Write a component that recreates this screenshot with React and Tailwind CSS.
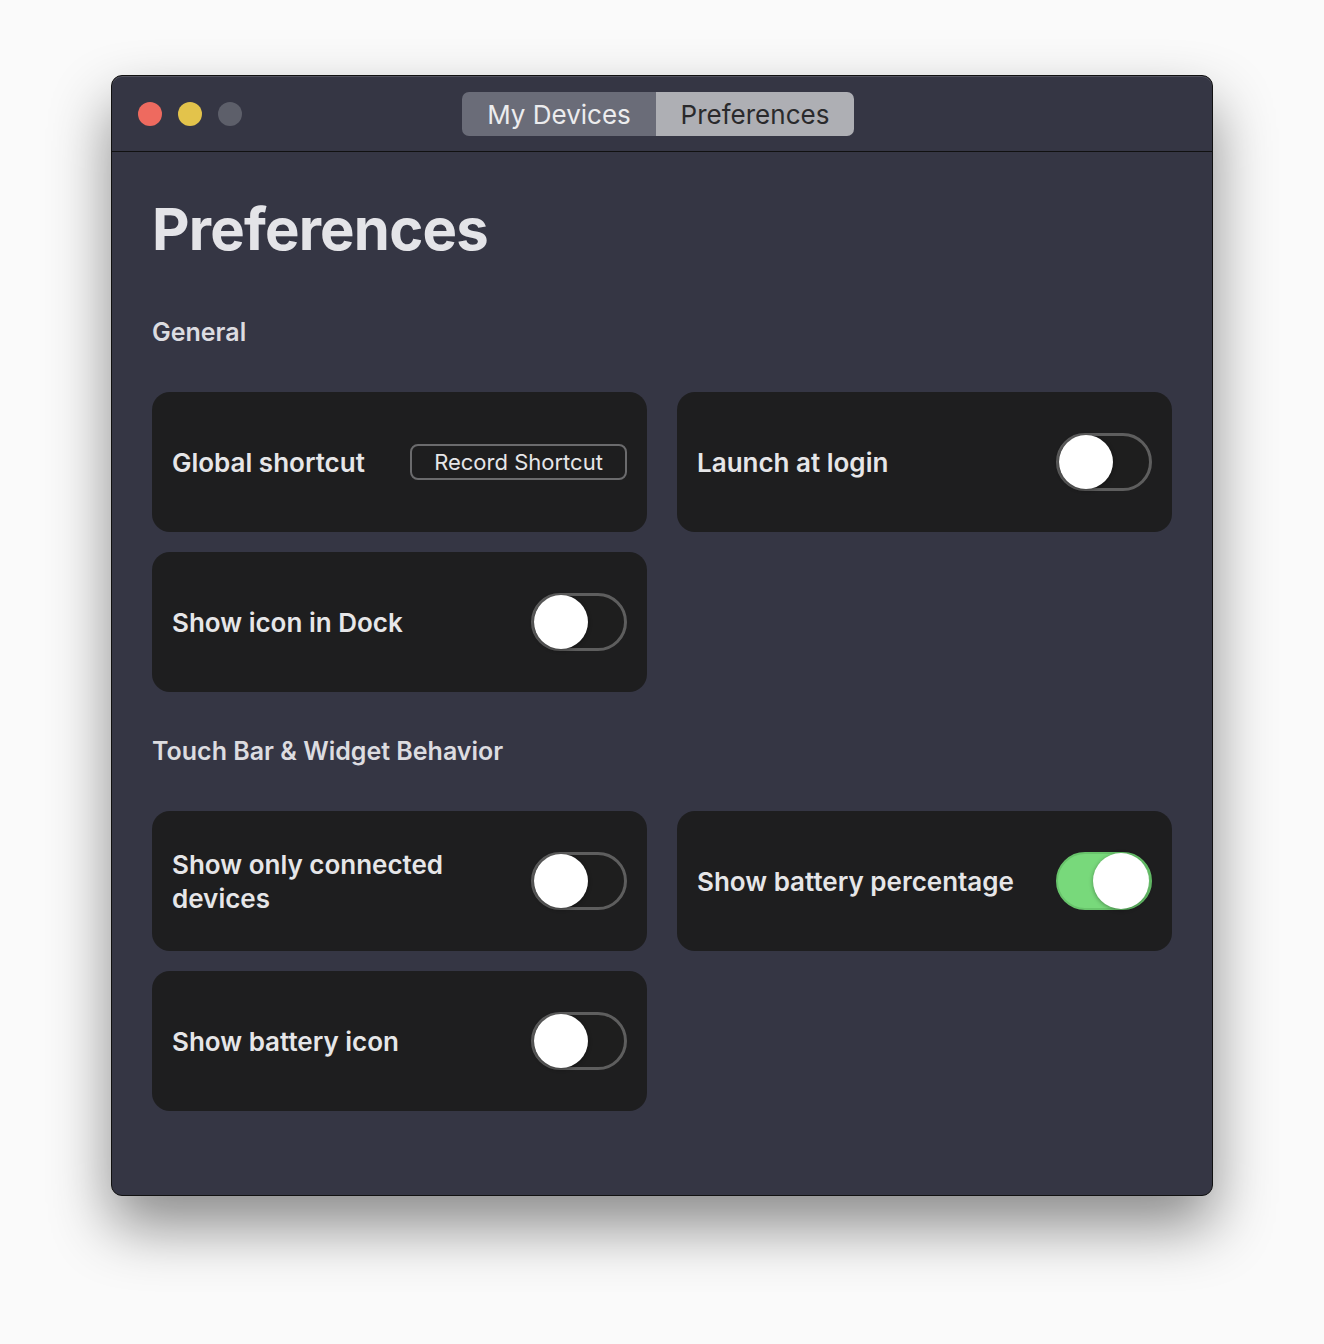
const font = { fontFamily: 'Inter, "Noto Sans", sans-serif' }

function Toggle({ on }) {
  if (on) {
    return (
      <div className="flex h-[58px] w-[96px] shrink-0 items-center justify-end rounded-full border-[2px] border-[#68c46b] bg-[#78d97b] pr-[1px]">
        <div className="h-[56px] w-[56px] rounded-full bg-white shadow-[0_1px_4px_rgba(0,0,0,0.35)]" />
      </div>
    )
  }
  return (
    <div className="flex h-[58px] w-[96px] shrink-0 items-center rounded-full border-[3px] border-[#5e5e5e] bg-[#1e1e1e]">
      <div className="h-[54px] w-[54px] rounded-full bg-white shadow-[0_1px_4px_rgba(0,0,0,0.4)]" />
    </div>
  )
}

function Card({ label, children }) {
  return (
    <div className="flex h-[140px] items-center justify-between rounded-[18px] bg-[#1e1e1f] px-[20px]">
      <div className="max-w-[340px] pt-[2px] text-[26px] font-semibold leading-[34px] text-[#e6e6e8]">{label}</div>
      {children}
    </div>
  )
}

export default function App() {
  return (
    <div className="h-[1344px] w-[1324px] bg-[#fafafa] pl-[111px] pt-[75px]" style={font}>
      <div className="h-[1121px] w-[1102px] overflow-hidden rounded-[11px] border border-[#111] bg-[#353644] shadow-[0_30px_60px_rgba(0,0,0,0.45),inset_0_1px_0_rgba(255,255,255,0.15)]">
        {/* title bar */}
        <div className="flex h-[76px] items-center border-b border-[#111] pl-[26px]">
          <div className="flex gap-[16px]">
            <div className="h-[24px] w-[24px] rounded-full bg-[#ee6a5f]" />
            <div className="h-[24px] w-[24px] rounded-full bg-[#e3c34b]" />
            <div className="h-[24px] w-[24px] rounded-full bg-[#5d5f6a]" />
          </div>
          <div className="ml-[220px] flex h-[44px] overflow-hidden rounded-[7px] text-[26px] leading-none">
            <div className="flex w-[194px] items-center justify-center bg-[#6a6c78] pt-[3px] text-[#ececee]">My Devices</div>
            <div className="flex w-[198px] items-center justify-center bg-[#aeafb4] pt-[3px] text-[#2a2a2c]">Preferences</div>
          </div>
        </div>

        {/* content */}
        <div className="px-[40px]">
          <h1 className="mt-[48px] text-[58px] font-bold leading-none tracking-[-0.8px] text-[#e4e4e8]">Preferences</h1>

          <h2 className="mt-[58px] text-[25px] font-semibold leading-[32px] text-[#dcdce0]">General</h2>
          <div className="mt-[44px] grid grid-cols-2 gap-x-[30px] gap-y-[20px]">
            <Card label="Global shortcut">
              <div className="flex h-[36px] w-[217px] items-center justify-center rounded-[8px] border-[2px] border-[#6b6b6d] text-[22px] text-[#e6e6e8]">
                Record Shortcut
              </div>
            </Card>
            <Card label="Launch at login">
              <Toggle />
            </Card>
            <Card label="Show icon in Dock">
              <Toggle />
            </Card>
          </div>

          <h2 className="mt-[43px] text-[25px] font-semibold leading-[32px] text-[#dcdce0]">Touch Bar &amp; Widget Behavior</h2>
          <div className="mt-[44px] grid grid-cols-2 gap-x-[30px] gap-y-[20px]">
            <Card label="Show only connected devices">
              <Toggle />
            </Card>
            <Card label="Show battery percentage">
              <Toggle on />
            </Card>
            <Card label="Show battery icon">
              <Toggle />
            </Card>
          </div>
        </div>
      </div>
    </div>
  )
}
